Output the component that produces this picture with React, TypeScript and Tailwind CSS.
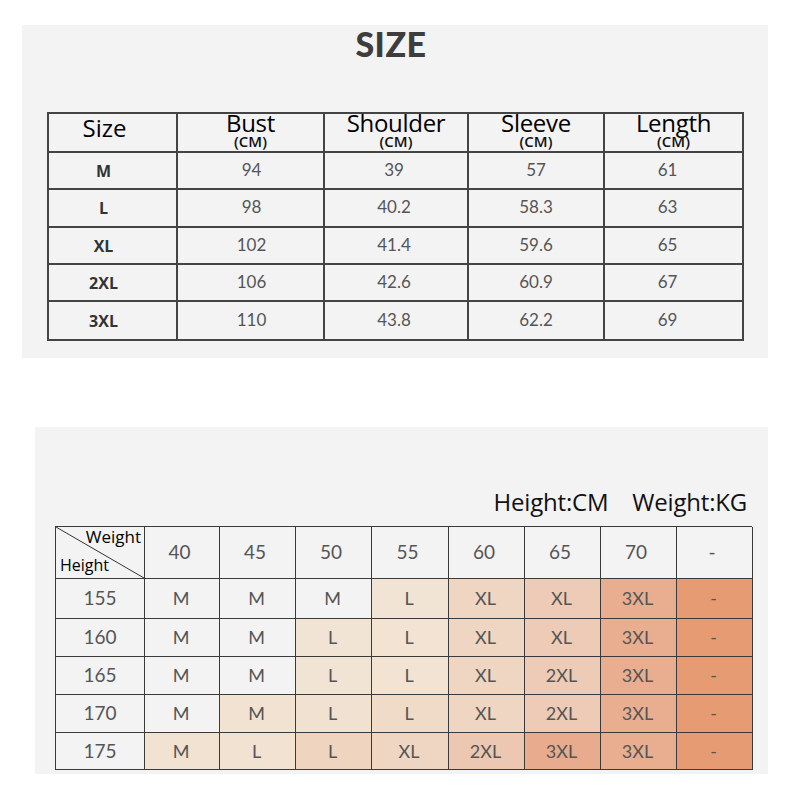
import React from 'react';

const sizeRows = [
  { size: 'M', bust: '94', shoulder: '39', sleeve: '57', length: '61' },
  { size: 'L', bust: '98', shoulder: '40.2', sleeve: '58.3', length: '63' },
  { size: 'XL', bust: '102', shoulder: '41.4', sleeve: '59.6', length: '65' },
  { size: '2XL', bust: '106', shoulder: '42.6', sleeve: '60.9', length: '67' },
  { size: '3XL', bust: '110', shoulder: '43.8', sleeve: '62.2', length: '69' },
];

const rowHeights = ['h-[37px]', 'h-[38px]', 'h-[37px]', 'h-[37px]', 'h-[39px]'];

const weights = ['40', '45', '50', '55', '60', '65', '70', '-'];

// each cell: [label, background]
const fitRows: { height: string; cells: [string, string][] }[] = [
  {
    height: '155',
    cells: [
      ['M', 'bg-[#f3f3f3]'], ['M', 'bg-[#f3f3f3]'], ['M', 'bg-[#f3f3f3]'], ['L', 'bg-[#f2e4d4]'],
      ['XL', 'bg-[#efd6c3]'], ['XL', 'bg-[#edcbb7]'], ['3XL', 'bg-[#e9ae90]'], ['-', 'bg-[#e79b73]'],
    ],
  },
  {
    height: '160',
    cells: [
      ['M', 'bg-[#f3f3f3]'], ['M', 'bg-[#f3f3f3]'], ['L', 'bg-[#f2e4d4]'], ['L', 'bg-[#f2e3d2]'],
      ['XL', 'bg-[#efd6c3]'], ['XL', 'bg-[#edcbb7]'], ['3XL', 'bg-[#e9ae90]'], ['-', 'bg-[#e79b73]'],
    ],
  },
  {
    height: '165',
    cells: [
      ['M', 'bg-[#f3f3f3]'], ['M', 'bg-[#f3f3f3]'], ['L', 'bg-[#f2e4d4]'], ['L', 'bg-[#f2e3d2]'],
      ['XL', 'bg-[#efd6c3]'], ['2XL', 'bg-[#edcbb7]'], ['3XL', 'bg-[#e9ae90]'], ['-', 'bg-[#e79b73]'],
    ],
  },
  {
    height: '170',
    cells: [
      ['M', 'bg-[#f3f3f3]'], ['M', 'bg-[#f1e2d2]'], ['L', 'bg-[#f1e1d0]'], ['L', 'bg-[#f0dac8]'],
      ['XL', 'bg-[#efd6c3]'], ['2XL', 'bg-[#edcbb7]'], ['3XL', 'bg-[#e9ae90]'], ['-', 'bg-[#e79b73]'],
    ],
  },
  {
    height: '175',
    cells: [
      ['M', 'bg-[#f1e2d2]'], ['L', 'bg-[#f1e2d1]'], ['L', 'bg-[#efd4c0]'], ['XL', 'bg-[#efd6c2]'],
      ['2XL', 'bg-[#ecc7b2]'], ['3XL', 'bg-[#e8ab8d]'], ['3XL', 'bg-[#e9ae90]'], ['-', 'bg-[#e79b73]'],
    ],
  },
];

const fitRowHeights = ['h-[40px]', 'h-[38px]', 'h-[38px]', 'h-[38px]', 'h-[37px]'];

const HeadCell: React.FC<{ label: string; className?: string }> = ({ label, className }) => (
  <div className={`border-r-2 border-b-2 border-[#444] flex flex-col items-center justify-start ${className ?? ''}`}>
    <span className="-mt-[2px] text-[24px] leading-[22px] text-[#000] tracking-[-0.3px]">{label}</span>
    <span className="text-[15px] leading-[14px] font-semibold text-[#111]">(CM)</span>
  </div>
);

export default function App() {
  return (
    <div className="w-[800px] h-[800px] bg-white flex flex-col" style={{ fontFamily: '"Open Sans", "Liberation Sans", sans-serif' }}>
      {/* size chart */}
      <section className="mt-[25px] ml-[22px] w-[746px] h-[333px] bg-[#f3f3f3] flex flex-col">
        <h1 className="self-center mr-[8px] -mt-[1px] text-[34px] leading-[40px] font-black text-[#3d3d3d] tracking-[0.5px]" style={{ fontFamily: 'Lato, "Open Sans", sans-serif' }}>
          SIZE
        </h1>
        <div className="mt-[48px] ml-[25px] w-[697px] grid grid-cols-[129px_147px_144px_136px_139px] border-l-2 border-t-2 border-[#444]">
          <div className="h-[39px] border-r-2 border-b-2 border-[#444] flex items-center justify-center pr-[16px] pb-[9px]">
            <span className="text-[24px] leading-[28px] text-[#000]">Size</span>
          </div>
          <HeadCell label="Bust" className="h-[39px]" />
          <HeadCell label="Shoulder" className="h-[39px]" />
          <HeadCell label="Sleeve" className="h-[39px]" />
          <HeadCell label="Length" className="h-[39px]" />
          {sizeRows.map((r, i) => (
            <React.Fragment key={r.size}>
              <div className={`${rowHeights[i]} border-r-2 border-b-2 border-[#444] flex items-center justify-center pr-[18px] text-[16px] font-bold text-[#333]`}>
                {r.size}
              </div>
              {[r.bust, r.shoulder, r.sleeve, r.length].map((v, j) => (
                <div key={j} className={`${rowHeights[i]} border-r-2 border-b-2 border-[#444] flex items-center justify-center pb-[2px] text-[17px] text-[#555] ${j === 0 ? 'pl-[2px]' : ''} ${j === 1 ? 'pr-[4px]' : ''} ${j === 3 ? 'pr-[12px]' : ''}`} style={{ fontFamily: 'Lato, "Open Sans", sans-serif' }}>
                  {v}
                </div>
              ))}
            </React.Fragment>
          ))}
        </div>
      </section>

      {/* height / weight chart */}
      <section className="mt-[69px] ml-[35px] w-[733px] h-[347px] bg-[#f3f3f3] flex flex-col">
        <p className="self-end mr-[21px] mt-[60px] text-[24px] leading-[30px] text-[#111] tracking-[-0.2px]">
          Height:CM<span className="inline-block w-[24px]" />Weight:KG
        </p>
        <div className="mt-[9px] ml-[20px] w-[697px] grid grid-cols-[89px_75px_76px_76px_77px_76px_76px_76px_76px] border-l border-t border-[#3a3a3a]" style={{ fontFamily: 'Lato, "Open Sans", sans-serif' }}>
          <div className="relative h-[52px] border-r border-b border-[#3a3a3a]" style={{ fontFamily: '"Open Sans", sans-serif' }}>
            <svg className="absolute inset-0" width="88" height="51" viewBox="0 0 88 51">
              <line x1="0" y1="0" x2="88" y2="51" stroke="#333" strokeWidth="1" />
            </svg>
            <span className="absolute right-[3px] -top-[1px] text-[17px] leading-[22px] text-[#000]">Weight</span>
            <span className="absolute left-[4px] bottom-[2px] text-[16px] leading-[22px] text-[#000]">Height</span>
          </div>
          {weights.map((w) => (
            <div key={w} className="h-[52px] border-r border-b border-[#3a3a3a] flex items-center justify-center pr-[5px] text-[19px] text-[#555]">
              {w}
            </div>
          ))}
          {fitRows.map((r, i) => (
            <React.Fragment key={r.height}>
              <div className={`${fitRowHeights[i]} border-r border-b border-[#3a3a3a] flex items-center justify-center text-[19px] text-[#555]`}>
                {r.height}
              </div>
              {r.cells.map(([label, bg], j) => (
                <div key={j} className={`${fitRowHeights[i]} ${bg} border-r border-b border-[#3a3a3a] flex items-center justify-center pr-[2px] text-[18px] text-[#555]`}>
                  {label}
                </div>
              ))}
            </React.Fragment>
          ))}
        </div>
      </section>
    </div>
  );
}
